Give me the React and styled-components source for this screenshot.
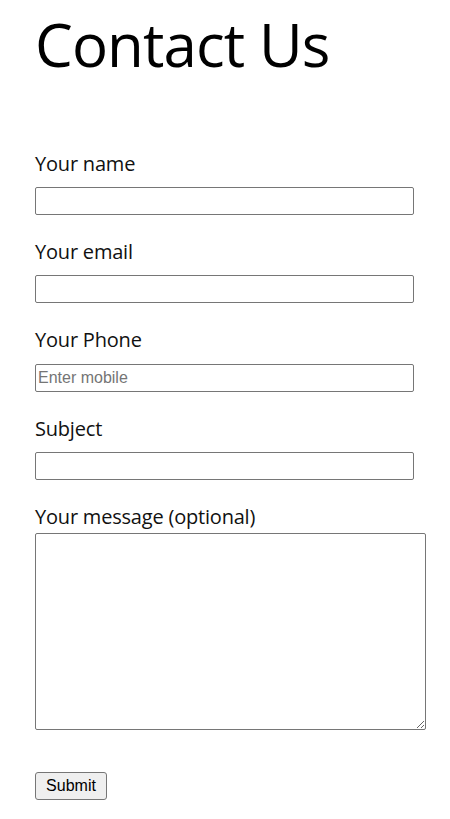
import React from "react";
import styled, { createGlobalStyle } from "styled-components";

const Global = createGlobalStyle`
  html, body { margin: 0; padding: 0; background: #fff; }
  body { font-family: "Open Sans", "Noto Sans", sans-serif; color: #000; }
`;

const Page = styled.div`
  padding: 14px 0 20px 35px;
  width: 450px;
  box-sizing: border-box;
`;

const Title = styled.h1`
  margin: 0 0 78px 0;
  font-size: 60px;
  line-height: 60px;
  font-weight: 400;
  letter-spacing: -0.9px;
`;

const Form = styled.form`
  display: flex;
  flex-direction: column;
`;

const Field = styled.div`
  display: flex;
  flex-direction: column;
  align-items: flex-start;
  margin-bottom: ${(p) => p.$after ?? 25}px;
`;

const Label = styled.label`
  font-size: 20px;
  line-height: 24px;
  height: 24px;
  margin-bottom: ${(p) => p.$gap ?? 11}px;
  color: #111;
  letter-spacing: -0.2px;
`;

const Input = styled.input`
  box-sizing: border-box;
  width: 379px;
  height: 28px;
  margin: 0;
  padding: 1px 2px;
  border: 1px solid #767676;
  border-radius: 2px;
  background: #fff;
  font: 16px "Liberation Sans", Arial, sans-serif;
  color: #000;
  &::placeholder { color: #757575; }
`;

const TextArea = styled.textarea`
  box-sizing: border-box;
  width: 391px;
  height: 197px;
  margin: 0;
  padding: 2px;
  border: 1px solid #767676;
  border-radius: 2px;
  background: #fff;
  font: 16px "Liberation Sans", Arial, sans-serif;
`;

const Submit = styled.button`
  box-sizing: border-box;
  width: 72px;
  height: 28px;
  padding: 0;
  border: 1px solid #767676;
  border-radius: 3px;
  background: #efefef;
  font: 16px "Liberation Sans", Arial, sans-serif;
  color: #000;
`;

export default function App() {
  return (
    <>
      <Global />
      <Page>
        <Title>Contact Us</Title>
        <Form onSubmit={(e) => e.preventDefault()}>
          <Field>
            <Label>Your name</Label>
            <Input type="text" />
          </Field>
          <Field>
            <Label>Your email</Label>
            <Input type="email" />
          </Field>
          <Field>
            <Label $gap={12}>Your Phone</Label>
            <Input type="tel" placeholder="Enter mobile" />
          </Field>
          <Field $after={25}>
            <Label>Subject</Label>
            <Input type="text" />
          </Field>
          <Field $after={42}>
            <Label $gap={4}>Your message (optional)</Label>
            <TextArea />
          </Field>
          <Field $after={0}>
            <Submit type="submit">Submit</Submit>
          </Field>
        </Form>
      </Page>
    </>
  );
}
